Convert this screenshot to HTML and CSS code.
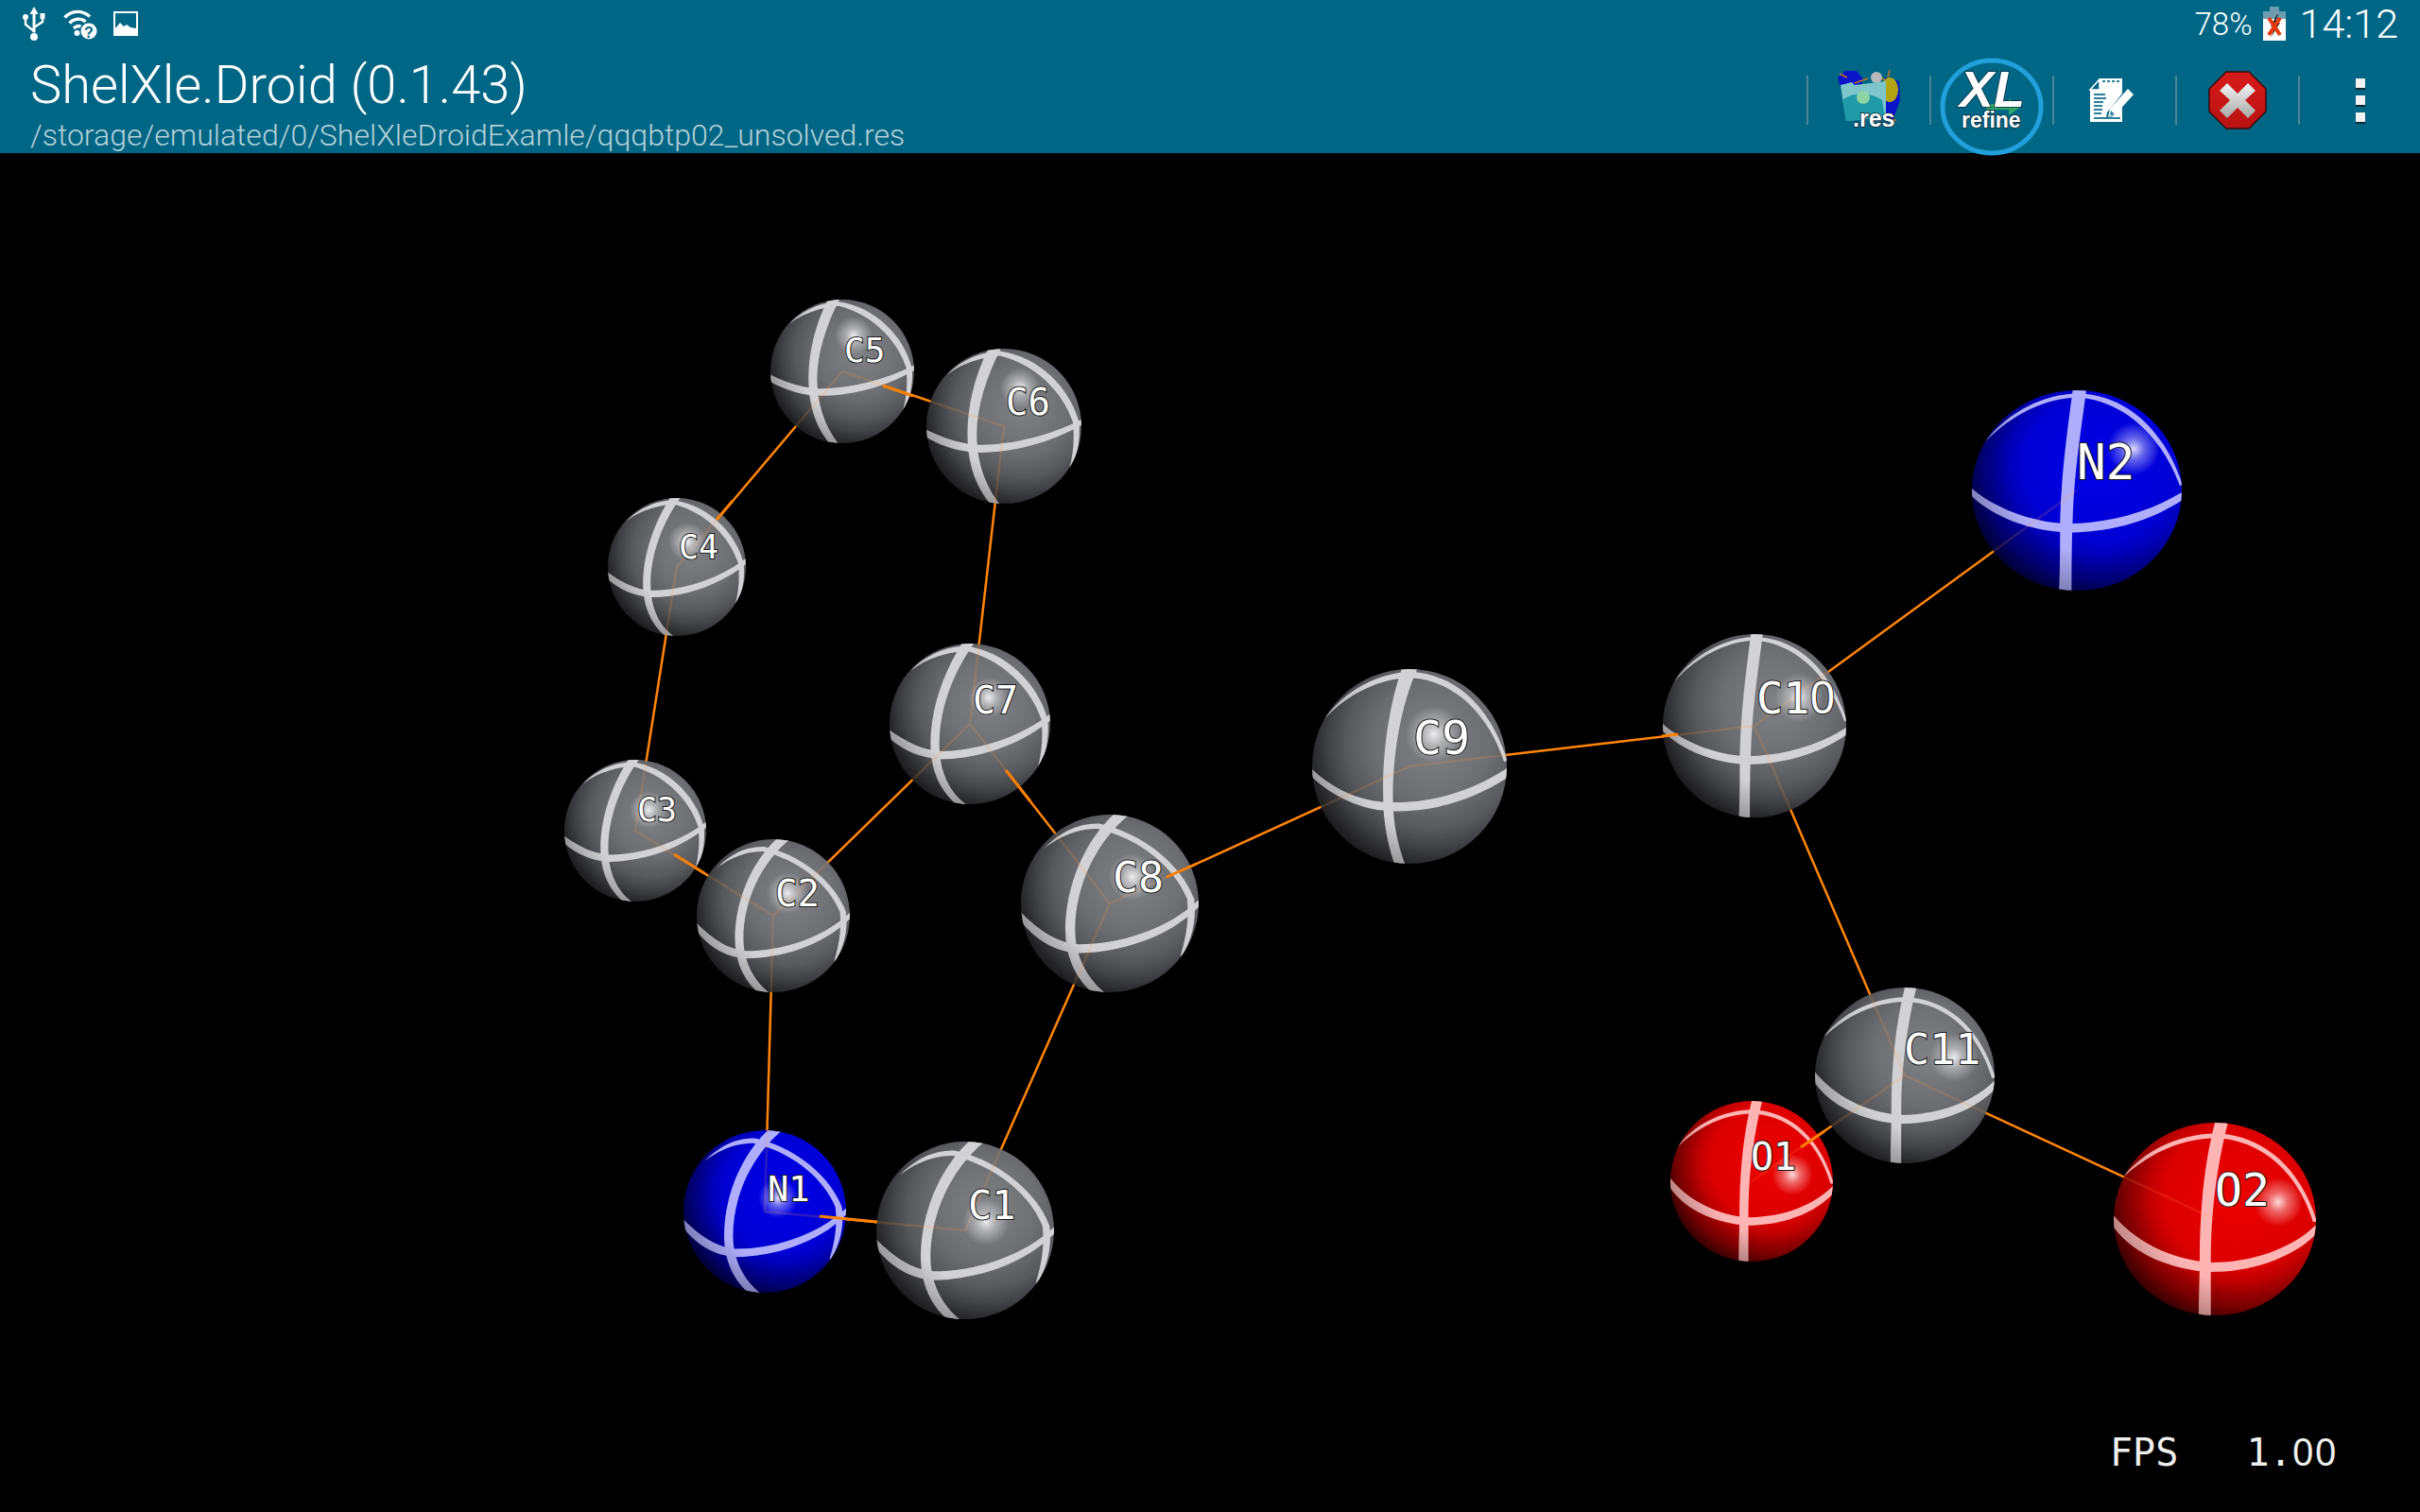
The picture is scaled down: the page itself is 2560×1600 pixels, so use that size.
FILE: index.html
```html
<!DOCTYPE html>
<html lang="en">

<head>
    <meta charset="UTF-8">
    <title>ShelXle.Droid</title>
    <link rel="stylesheet" href="styles.css">
</head>

<body>
    <header class="topbar">
        <div class="status-bar">
            <div class="status-left">
                <svg class="ic-usb" width="24" height="36" viewBox="0 0 24 36">
                    <path d="M12 0l4.500 8h-3v19.500h-3V8h-3z" fill="#fff" />
                    <circle cx="12" cy="32" r="4" fill="#fff" />
                    <path d="M12 26L3 19v-6M12 22l9-6v-4" fill="none" stroke="#fff" stroke-width="2.400" />
                    <circle cx="3" cy="11" r="3" fill="#fff" />
                    <rect x="18.500" y="7" width="5" height="6" fill="#fff" />
                </svg>
                <svg class="ic-wifi" width="36" height="33" viewBox="0 0 36 33">
                    <g fill="none" stroke="#fff" stroke-width="3.400">
                        <path d="M1.500 9.500C9 1.500 20 1.500 28 8.500" />
                        <path d="M6.500 15.500C11.500 10 19 10 23.500 14" />
                        <path d="M11 21C13.500 18.500 16 18 18.500 19" />
                    </g>
                    <circle cx="14.500" cy="26" r="3" fill="#fff" />
                    <circle cx="27" cy="24" r="8.500" fill="#fff" />
                    <text class="ic-wifi-q" x="27" y="30.500">?</text>
                </svg>
                <svg class="ic-pic" width="26" height="26" viewBox="0 0 26 26">
                    <rect x="1" y="1" width="24" height="24" fill="none" stroke="#fff" stroke-width="2" />
                    <path d="M2 24v-6l5-6 4 4 3-2 4 3 6 1v6z" fill="#fff" />
                </svg>
            </div>
            <div class="status-right">
                <span class="battery-text">78%</span>
                <svg class="ic-battery" width="24" height="36" viewBox="0 0 24 36">
                    <rect x="7" y="0" width="10" height="5" fill="#6f9db0" />
                    <rect x="0" y="5" width="24" height="8" fill="#6f9db0" />
                    <rect x="0" y="13" width="24" height="23" fill="#fff" />
                    <path d="M15 8L8 21h5l-5 12 10-16h-5l3-9z" fill="#222" />
                    <path d="M6 12l12 18M18 12L6 30" stroke="#e8380c" stroke-width="4" />
                </svg>
                <span class="clock">14:12</span>
            </div>
        </div>

        <div class="action-bar">
            <div class="title-block">
                <div class="app-title">ShelXle.Droid (0.1.43)</div>
                <div class="app-path">/storage/emulated/0/ShelXleDroidExamle/qqqbtp02_unsolved.res</div>
            </div>
            <div class="actions">
                <span class="divider"></span>
                <div class="action">
                    <svg width="66" height="64" viewBox="0 0 66 64">
                        <path d="M0 8L8 1l12 0 7 9-2 6L3 18z" fill="#0a14c8" />
                        <path d="M18 14L32 9M42 8l12 3M55 0l-2 8M2 4l8 4M50 46l12 8" stroke="#c8741e" stroke-width="1.500" />
                        <circle cx="41" cy="8" r="6" fill="#b8b8bc" />
                        <path d="M50 8l15 4 1 20-8 22-8-4z" fill="#0a14c8" />
                        <ellipse cx="55" cy="21" rx="9" ry="13" fill="#b4a414" />
                        <path d="M3 16L15 13l3 3 33-4v38L9 54z" fill="#7ec6cc" />
                        <path d="M9 54L5 32c12-10 30-8 42 0l3 18z" fill="#1f9aa6" />
                        <circle cx="27" cy="29" r="7" fill="#8fd4a4" />
                        <text class="ic-res-text" x="16" y="60">.res</text>
                    </svg>
                </div>
                <span class="divider"></span>
                <div class="action action-xl">
                    <svg class="ic-xl" width="112" height="108" viewBox="0 0 112 108">
                        <ellipse cx="56" cy="54" rx="52" ry="49" fill="none" stroke="#22a0dc" stroke-width="5" />
                        <path d="M50 51h24v-6l13 9-13 9v-6H50z" fill="#2fa56a" />
                        <text class="xl-big" x="22" y="54">XL</text>
                        <text class="xl-small" x="24" y="76">refine</text>
                    </svg>
                </div>
                <span class="divider"></span>
                <div class="action action-edit">
                    <svg width="48" height="46" viewBox="0 0 48 46">
                        <path d="M12 0h24v16L20 36l-1 6 7-2 10-12v18H2V12z" fill="#fff" />
                        <path d="M12 1v11H2z" fill="#006685" stroke="#fff" stroke-width="1.500" />
                        <path d="M15 3h19" stroke="#2a7f9b" stroke-width="1.800" stroke-dasharray="3 2" />
                        <path d="M6 17h12M6 21h13M6 25h10M6 29h9M6 33h9M6 37h8M6 42h28" stroke="#2a7f9b" stroke-width="1.800" />
                        <path d="M21 41l2-9L42 11l6 6-19 21z" fill="#fff" />
                        <path d="M23 39l1-5 4 4z" fill="#2a7f9b" />
                    </svg>
                </div>
                <span class="divider"></span>
                <div class="action">
                    <svg width="62" height="62" viewBox="0 0 62 62">
                        <defs>
                            <linearGradient id="stop-x" x1="0" y1="0" x2="0" y2="1">
                                <stop offset="0" stop-color="#f4f4f4" />
                                <stop offset="1" stop-color="#a8a8a8" />
                            </linearGradient>
                            <linearGradient id="stop-red" x1="0" y1="0" x2="0" y2="1">
                                <stop offset="0" stop-color="#d81a1a" />
                                <stop offset="1" stop-color="#b81212" />
                            </linearGradient>
                        </defs>
                        <path d="M19 1h24l18 18v24L43 61H19L1 43V19z" fill="url(#stop-red)" stroke="#3a0a0a" stroke-width="1.500" />
                        <path d="M20 13l11 11 11-11 8 8-11 10 11 11-8 8-11-11-11 11-8-8 11-11-11-10z" fill="url(#stop-x)" />
                    </svg>
                </div>
                <span class="divider"></span>
                <div class="action action-last">
                    <div class="overflow-dots">
                        <span></span>
                        <span></span>
                        <span></span>
                    </div>
                </div>
            </div>
        </div>
    </header>

    <main class="viewer">
        <svg class="molecule" width="2560" height="1438" viewBox="0 162 2560 1438">
            <defs>
                <radialGradient id="ball-c" cx="0.62" cy="0.38" r="0.74">
                    <stop offset="0" stop-color="#808185" />
                    <stop offset="0.4" stop-color="#6d6e72" />
                    <stop offset="0.72" stop-color="#4b4c50" />
                    <stop offset="1" stop-color="#161617" />
                </radialGradient>
                <radialGradient id="ball-n" cx="0.62" cy="0.38" r="0.74">
                    <stop offset="0" stop-color="#0000e8" />
                    <stop offset="0.5" stop-color="#0000d4" />
                    <stop offset="0.78" stop-color="#000088" />
                    <stop offset="1" stop-color="#000020" />
                </radialGradient>
                <radialGradient id="ball-o" cx="0.62" cy="0.38" r="0.74">
                    <stop offset="0" stop-color="#ec0000" />
                    <stop offset="0.5" stop-color="#dc0000" />
                    <stop offset="0.78" stop-color="#900000" />
                    <stop offset="1" stop-color="#200000" />
                </radialGradient>
                <radialGradient id="spark">
                    <stop offset="0" stop-color="#fff" stop-opacity="0.85" />
                    <stop offset="0.4" stop-color="#fff" stop-opacity="0.4" />
                    <stop offset="1" stop-color="#fff" stop-opacity="0" />
                </radialGradient>
                <radialGradient id="limb" cx="0.62" cy="0.38" r="0.74">
                    <stop offset="0.6" stop-color="#000" stop-opacity="0" />
                    <stop offset="1" stop-color="#000" stop-opacity="0.4" />
                </radialGradient>
                <clipPath id="ball-clip">
                    <circle r="100" />
                </clipPath>

                <g id="bands-up" clip-path="url(#ball-clip)">
                    <path d="M-101 4C-75 17 -50 24 -30 24C10 24 60 12 101 -9L101 -2C60 22 10 34 -30 34C-55 34 -80 26 -101 14Z" />
                    <path d="M-20 -100C-38 -65 -47 -25 -47 10C-47 50 -35 80 -18 100L-6 100C-25 75 -35 45 -35 10C-35 -25 -22 -65 -4 -100Z" />
                    <path d="M-74 -66C-50 -90 -25 -96 -5 -97C45 -90 85 -50 97 -5C99 20 94 42 84 60L84 56C90 35 91 15 89 -5C76 -45 40 -80 -5 -91C-25 -89 -50 -84 -74 -66Z" />
                </g>
                <g id="bands-left" clip-path="url(#ball-clip)">
                    <path d="M-101 7C-80 22 -60 33 -35 34C10 33 60 18 101 -13L101 -5C60 28 10 43 -35 44C-62 43 -85 32 -101 17Z" />
                    <path d="M-10 -100C-32 -65 -49 -20 -49 25C-49 60 -35 85 -17 100L-5 100C-25 85 -38 60 -38 25C-38 -20 -20 -65 5 -100Z" />
                    <path d="M-74 -66C-50 -90 -25 -96 -5 -97C45 -90 85 -50 97 -5C99 20 94 42 84 60L84 56C90 35 91 15 89 -5C76 -45 40 -80 -5 -91C-25 -89 -50 -84 -74 -66Z" />
                </g>
                <g id="bands-tilt" clip-path="url(#ball-clip)">
                    <path d="M-101 9C-80 30 -60 44 -35 46C10 46 65 30 101 -5L101 3C65 40 10 55 -35 56C-62 55 -85 40 -101 19Z" />
                    <path d="M4 -100C-28 -70 -50 -20 -50 30C-50 60 -38 85 -20 100L-6 100C-25 85 -39 60 -39 30C-39 -20 -15 -70 22 -100Z" />
                    <path d="M-74 -62C-50 -86 -30 -90 -12 -90C35 -80 80 -45 95 -5C98 20 92 42 80 62L80 57C87 35 89 15 87 -5C72 -42 33 -73 -14 -84C-30 -84 -50 -80 -74 -62Z" />
                </g>
                <g id="bands-mid" clip-path="url(#ball-clip)">
                    <path d="M-100 3C-80 22 -50 38 -15 37C20 37 60 28 100 2L100 12C60 38 20 46 -15 46C-50 46 -80 30 -100 11Z" />
                    <path d="M-8 -100C-22 -60 -28 -10 -27 30C-27 60 -22 80 -15 102L-4 102C-12 80 -17 60 -17 30C-17 -10 -10 -60 8 -100Z" />
                    <path d="M-88 -48C-65 -80 -30 -96 0 -97C40 -96 80 -70 101 -5L97 -5C78 -62 38 -90 0 -91C-30 -90 -62 -76 -88 -48Z" />
                </g>
                <g id="bands-straight" clip-path="url(#ball-clip)">
                    <path d="M-100 -2C-80 16 -45 32 -8 33C25 33 65 24 100 2L100 10C65 34 25 42 -8 42C-45 41 -80 26 -100 6Z" />
                    <path d="M-4 -100C-9 -60 -15 -15 -16 30C-16 55 -16 80 -17 100L-5 100C-5 80 -5 55 -4 30C-3 -15 4 -60 9 -100Z" />
                    <path d="M-88 -48C-65 -80 -30 -96 0 -97C40 -96 80 -70 101 -5L98 -5C78 -62 38 -91 0 -93C-30 -92 -62 -76 -88 -48Z" />
                </g>
                <g id="bands-low" clip-path="url(#ball-clip)">
                    <path d="M-101 -5C-80 22 -45 42 -5 45C35 45 75 32 101 5L101 15C75 42 35 55 -5 55C-50 52 -85 32 -101 7Z" />
                    <path d="M0 -100C-10 -60 -15 -10 -15 40C-15 60 -16 80 -16 100L-4 100C-4 80 -4 60 -4 40C-4 -10 3 -60 13 -100Z" />
                    <path d="M-92 -42C-70 -72 -35 -88 0 -89C40 -88 82 -62 101 3L97 3C80 -55 40 -83 0 -84C-35 -83 -65 -68 -92 -42Z" />
                </g>

                <g id="bonds">
                    <path d="M891 393L716 600L672 879L818 969L1026 766L1062 451L891 393" />
                    <path d="M1026 766L1174 956L1491 811L1856 768L2197 519" />
                    <path d="M818 969L809 1282L1021 1302L1174 956" />
                    <path d="M1856 768L2015 1138L1853 1250" />
                    <path d="M2015 1138L2343 1290" />
                </g>
            </defs>

            <use class="bonds" href="#bonds" />

            <!-- atoms -->
            <g class="atom-c" transform="translate(891 393) scale(.76)">
                <circle r="100" fill="url(#ball-c)" /><use href="#bands-up" /><circle r="100" fill="url(#limb)" />
            </g>
            <g class="atom-c" transform="translate(1062 451) scale(.82)">
                <circle r="100" fill="url(#ball-c)" /><use href="#bands-up" /><circle r="100" fill="url(#limb)" />
            </g>
            <g class="atom-c" transform="translate(716 600) scale(.73)">
                <circle r="100" fill="url(#ball-c)" /><use href="#bands-left" /><circle r="100" fill="url(#limb)" />
            </g>
            <g class="atom-c" transform="translate(1026 766) scale(.85)">
                <circle r="100" fill="url(#ball-c)" /><use href="#bands-left" /><circle r="100" fill="url(#limb)" />
            </g>
            <g class="atom-c" transform="translate(672 879) scale(.75)">
                <circle r="100" fill="url(#ball-c)" /><use href="#bands-left" /><circle r="100" fill="url(#limb)" />
            </g>
            <g class="atom-c" transform="translate(818 969) scale(.81)">
                <circle r="100" fill="url(#ball-c)" /><use href="#bands-tilt" /><circle r="100" fill="url(#limb)" />
            </g>
            <g class="atom-c" transform="translate(1174 956) scale(.94)">
                <circle r="100" fill="url(#ball-c)" /><use href="#bands-tilt" /><circle r="100" fill="url(#limb)" />
            </g>
            <g class="atom-c" transform="translate(1021 1302) scale(.94)">
                <circle r="100" fill="url(#ball-c)" /><use href="#bands-tilt" /><circle r="100" fill="url(#limb)" />
            </g>
            <g class="atom-n" transform="translate(809 1282) scale(.86)">
                <circle r="100" fill="url(#ball-n)" /><use href="#bands-tilt" /><circle r="100" fill="url(#limb)" />
            </g>
            <g class="atom-c" transform="translate(1491 811) scale(1.03)">
                <circle r="100" fill="url(#ball-c)" /><use href="#bands-mid" /><circle r="100" fill="url(#limb)" />
            </g>
            <g class="atom-c" transform="translate(1856 768) scale(.97)">
                <circle r="100" fill="url(#ball-c)" /><use href="#bands-straight" /><circle r="100" fill="url(#limb)" />
            </g>
            <g class="atom-n" transform="translate(2197 519) scale(1.11 1.06)">
                <circle r="100" fill="url(#ball-n)" /><use href="#bands-straight" /><circle r="100" fill="url(#limb)" />
            </g>
            <g class="atom-c" transform="translate(2015 1138) scale(.95 .93)">
                <circle r="100" fill="url(#ball-c)" /><use href="#bands-low" /><circle r="100" fill="url(#limb)" />
            </g>
            <g class="atom-o" transform="translate(1853 1250) scale(.86 .85)">
                <circle r="100" fill="url(#ball-o)" /><use href="#bands-low" /><circle r="100" fill="url(#limb)" />
            </g>
            <g class="atom-o" transform="translate(2343 1290) scale(1.07 1.02)">
                <circle r="100" fill="url(#ball-o)" /><use href="#bands-low" /><circle r="100" fill="url(#limb)" />
            </g>

            <!-- bonds seen through the spheres -->
            <use class="bonds-inside" href="#bonds" />

            <!-- bond ends that sit in front -->
            <path class="bond-front" d="M934 408L966 419" />
            <path class="bond-front" d="M867 1287L928 1293" />
            <path class="bond-front" d="M1234 928L1266 914" />
            <path class="bond-front" d="M1758 779L1775 777" />
            <path class="bond-front" d="M1905 1214L1930 1197" />
            <path class="bond-front" d="M713 904L745 924" />
            <path class="bond-front" d="M1064 815L1090 848" />
            <path class="bond-front" d="M758 550L775 530" />

            <!-- specular spots -->
            <circle cx="903" cy="355" r="20" fill="url(#spark)" />
            <circle cx="1079" cy="410" r="21" fill="url(#spark)" />
            <circle cx="727" cy="573" r="20" fill="url(#spark)" />
            <circle cx="1046" cy="738" r="21" fill="url(#spark)" />
            <circle cx="686" cy="857" r="20" fill="url(#spark)" />
            <circle cx="833" cy="945" r="22" fill="url(#spark)" />
            <circle cx="1198" cy="928" r="25" fill="url(#spark)" />
            <circle cx="1043" cy="1293" r="25" fill="url(#spark)" />
            <circle cx="823" cy="1268" r="21" fill="url(#spark)" />
            <circle cx="1517" cy="777" r="30" fill="url(#spark)" />
            <circle cx="1903" cy="738" r="26" fill="url(#spark)" />
            <circle cx="2257" cy="475" r="28" fill="url(#spark)" />
            <circle cx="2067" cy="1119" r="26" fill="url(#spark)" />
            <circle cx="1896" cy="1243" r="22" fill="url(#spark)" />
            <circle cx="2410" cy="1272" r="26" fill="url(#spark)" />

            <!-- labels -->
            <text class="label" x="893" y="383" font-size="36">C5</text>
            <text class="label" x="1064" y="439" font-size="39">C6</text>
            <text class="label" x="718" y="591" font-size="35">C4</text>
            <text class="label" x="1029" y="755" font-size="40">C7</text>
            <text class="label" x="674" y="869" font-size="35">C3</text>
            <text class="label" x="820" y="959" font-size="39">C2</text>
            <text class="label" x="1177" y="944" font-size="45">C8</text>
            <text class="label" x="1024" y="1290" font-size="42">C1</text>
            <text class="label" x="812" y="1271" font-size="37">N1</text>
            <text class="label" x="1495" y="798" font-size="50">C9</text>
            <text class="label" x="1858" y="755" font-size="47">C1<tspan class="plain-zero">0</tspan></text>
            <text class="label" x="2197" y="507" font-size="51">N2</text>
            <text class="label" x="2014" y="1126" font-size="45">C11</text>
            <text class="label" x="1852" y="1238" font-size="40">O1</text>
            <text class="label" x="2343" y="1276" font-size="48">O2</text>
        </svg>

        <div class="fps">FPS   1.<span class="plain-zero">00</span></div>
    </main>
</body>

</html>
```

FILE: styles.css
```css
html,
body {
    margin: 0;
    height: 100%;
    background: #000;
    overflow: hidden;
}

body {
    font-family: Roboto, "Liberation Sans", sans-serif;
    color: #fff;
}

/* top bars */

.topbar {
    position: relative;
    z-index: 1;
    height: 162px;
    background: #006685;
}

.status-bar {
    height: 50px;
    display: flex;
    justify-content: space-between;
    align-items: center;
}

.status-left {
    display: flex;
    align-items: center;
    padding-left: 24px;
}

.ic-usb {
    margin-right: 19px;
}

.ic-wifi {
    margin-right: 17px;
}

.ic-wifi-q {
    font-family: "Liberation Sans", sans-serif;
    font-size: 16px;
    font-weight: bold;
    text-anchor: middle;
    fill: #006685;
}

.status-right {
    display: flex;
    align-items: center;
    padding-right: 23px;
}

.battery-text {
    font-size: 33px;
    font-weight: 300;
    margin-right: 11px;
}

.clock {
    font-size: 43px;
    font-weight: 300;
    margin-left: 15px;
}

.action-bar {
    height: 112px;
    display: flex;
    justify-content: space-between;
}

.title-block {
    padding: 7px 0 0 32px;
}

.app-title {
    font-size: 56px;
    font-weight: 300;
    line-height: 66px;
}

.app-path {
    margin-top: 3px;
    font-size: 32px;
    font-weight: 300;
    line-height: 34px;
    color: #b7d0d9;
}

.actions {
    display: flex;
    align-items: center;
}

.divider {
    width: 2px;
    height: 52px;
    background: #4f8599;
}

.action {
    width: 128px;
    height: 112px;
    display: flex;
    justify-content: center;
    align-items: center;
}

.action-last {
    width: 127px;
}

.action-edit svg {
    margin-right: 8px;
}

.ic-res-text {
    font-family: "Liberation Sans", sans-serif;
    font-size: 25px;
    font-weight: bold;
    fill: #fff;
    paint-order: stroke;
    stroke: #123;
    stroke-width: 1.500px;
}

.action-xl {
    overflow: visible;
}

.ic-xl {
    flex: none;
    overflow: visible;
    margin: 14px -2px 0;
}

.xl-big {
    font-family: "Liberation Sans", sans-serif;
    font-size: 54px;
    font-weight: bold;
    font-style: italic;
    fill: #fff;
    paint-order: stroke;
    stroke: #0a2a38;
    stroke-width: 1.500px;
}

.xl-small {
    font-family: "Liberation Sans", sans-serif;
    font-size: 23px;
    font-weight: bold;
    fill: #fff;
    paint-order: stroke;
    stroke: #0a2a38;
    stroke-width: 1.500px;
}

.overflow-dots {
    display: flex;
    flex-direction: column;
    gap: 8px;
}

.overflow-dots span {
    width: 10px;
    height: 10px;
    background: #f2f2f2;
    box-shadow: 0 2px 0 #0a2a38;
}

/* molecule view */

.viewer {
    position: relative;
    height: 1438px;
    background: #000;
}

.molecule {
    display: block;
}

.bonds {
    fill: none;
    stroke: #ff8000;
    stroke-width: 2.500px;
}

.bonds-inside {
    fill: none;
    stroke: #ff9a40;
    stroke-width: 2.500px;
    opacity: 0.17;
}

.bond-front {
    fill: none;
    stroke: #ff8000;
    stroke-width: 3px;
}

.atom-c {
    fill: #d2d2d4;
}

.atom-n {
    fill: #aeaefc;
}

.atom-o {
    fill: #ffb4b4;
}

.label {
    font-family: "DejaVu Sans Mono", monospace;
    fill: #fff;
    stroke: #1c1c1c;
    stroke-width: 2px;
    paint-order: stroke;
}

.plain-zero {
    font-family: "Noto Sans", sans-serif;
    letter-spacing: 0.03em;
}

.fps {
    position: absolute;
    left: 2232px;
    top: 1350px;
    font-family: "DejaVu Sans Mono", monospace;
    font-size: 40px;
    line-height: 48px;
    color: #eee;
    white-space: pre;
}
```
